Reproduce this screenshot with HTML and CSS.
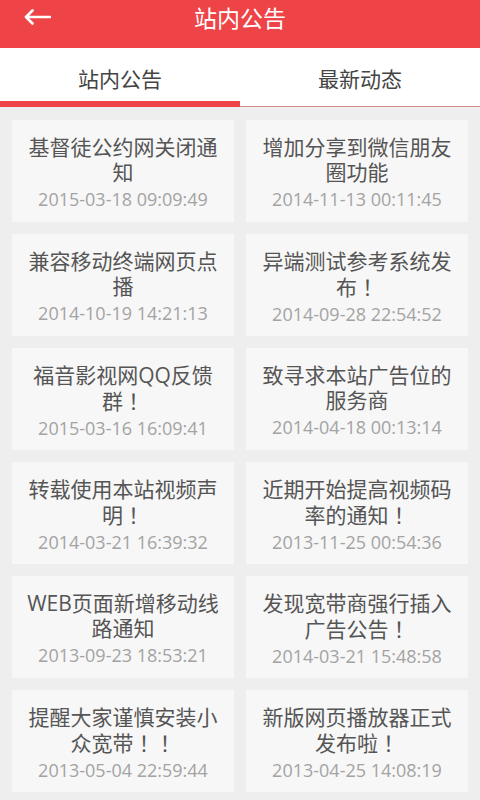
FILE: index.html
```html
<!DOCTYPE html>
<html>
<head>
    <title>站内公告</title>
    <link rel="stylesheet" href="styles.css">
</head>
<body>
    <div class="topbar">
        <a class="back" href="#">
            <svg width="28" height="16" viewBox="0 0 28 16">
                <path d="M27 8H3M9.5 1.5L3 8l6.5 6.5" fill="none" stroke="#fff" stroke-width="2.6" stroke-linecap="round" stroke-linejoin="round"/>
            </svg>
        </a>
        <h1>站内公告</h1>
    </div>
    <div class="tabs">
        <div class="tab active">站内公告</div>
        <div class="tab">最新动态</div>
    </div>
    <div class="list">
        <div class="card">
            <div class="title">基督徒公约网关闭通知</div>
            <div class="date">2015-03-18 09:09:49</div>
        </div>
        <div class="card">
            <div class="title">增加分享到微信朋友圈功能</div>
            <div class="date">2014-11-13 00:11:45</div>
        </div>
        <div class="card">
            <div class="title">兼容移动终端网页点播</div>
            <div class="date">2014-10-19 14:21:13</div>
        </div>
        <div class="card">
            <div class="title">异端测试参考系统发布<span class="fw">！</span></div>
            <div class="date">2014-09-28 22:54:52</div>
        </div>
        <div class="card">
            <div class="title">福音影视网QQ反馈群<span class="fw">！</span></div>
            <div class="date">2015-03-16 16:09:41</div>
        </div>
        <div class="card">
            <div class="title">致寻求本站广告位的服务商</div>
            <div class="date">2014-04-18 00:13:14</div>
        </div>
        <div class="card">
            <div class="title">转载使用本站视频声明<span class="fw">！</span></div>
            <div class="date">2014-03-21 16:39:32</div>
        </div>
        <div class="card">
            <div class="title">近期开始提高视频码率的通知<span class="fw">！</span></div>
            <div class="date">2013-11-25 00:54:36</div>
        </div>
        <div class="card">
            <div class="title">WEB页面新增移动线路通知</div>
            <div class="date">2013-09-23 18:53:21</div>
        </div>
        <div class="card">
            <div class="title">发现宽带商强行插入广告公告<span class="fw">！</span></div>
            <div class="date">2014-03-21 15:48:58</div>
        </div>
        <div class="card">
            <div class="title">提醒大家谨慎安装小众宽带<span class="fw">！！</span></div>
            <div class="date">2013-05-04 22:59:44</div>
        </div>
        <div class="card">
            <div class="title">新版网页播放器正式发布啦<span class="fw">！</span></div>
            <div class="date">2013-04-25 14:08:19</div>
        </div>
    </div>
</body>
</html>
```

FILE: styles.css
```css
body {
    margin: 0;
    padding: 0;
    background-color: #eeeeee;
    font-family: "Open Sans", "Noto Sans CJK SC", sans-serif;
    overflow: hidden;
}
.topbar {
    height: 48px;
    box-sizing: border-box;
    padding-bottom: 12px;
    background-color: #ef4447;
    position: relative;
    display: flex;
    align-items: center;
    justify-content: center;
}
.back {
    position: absolute;
    left: 23px;
    top: 9px;
    display: flex;
}
h1 {
    margin: 0;
    color: white;
    font-size: 23px;
    font-weight: normal;
    line-height: 36px;
}
.tabs {
    display: flex;
    background-color: white;
    border-bottom: 1px solid #d9898a;
}
.tab {
    flex: 1;
    height: 58px;
    box-sizing: border-box;
    padding-top: 16px;
    line-height: 30px;
    text-align: center;
    font-size: 21px;
    color: #444444;
}
.tab.active {
    border-bottom: 6px solid #ef4447;
    margin-bottom: -1px;
    height: 59px;
}
.list {
    display: grid;
    grid-template-columns: 1fr 1fr;
    gap: 12px;
    padding: 13px 12px 12px;
}
.card {
    height: 102px;
    box-sizing: border-box;
    padding: 15px 10px 12px;
    background-color: #f7f7f7;
    text-align: center;
}
.title {
    font-size: 21px;
    line-height: 25px;
    color: #555555;
}
.fw {
    font-family: "Noto Sans CJK TC", sans-serif;
    text-spacing-trim: space-all;
}
.date {
    margin-top: 3px;
    font-size: 18px;
    line-height: 22px;
    color: #a3a3a3;
}
```
